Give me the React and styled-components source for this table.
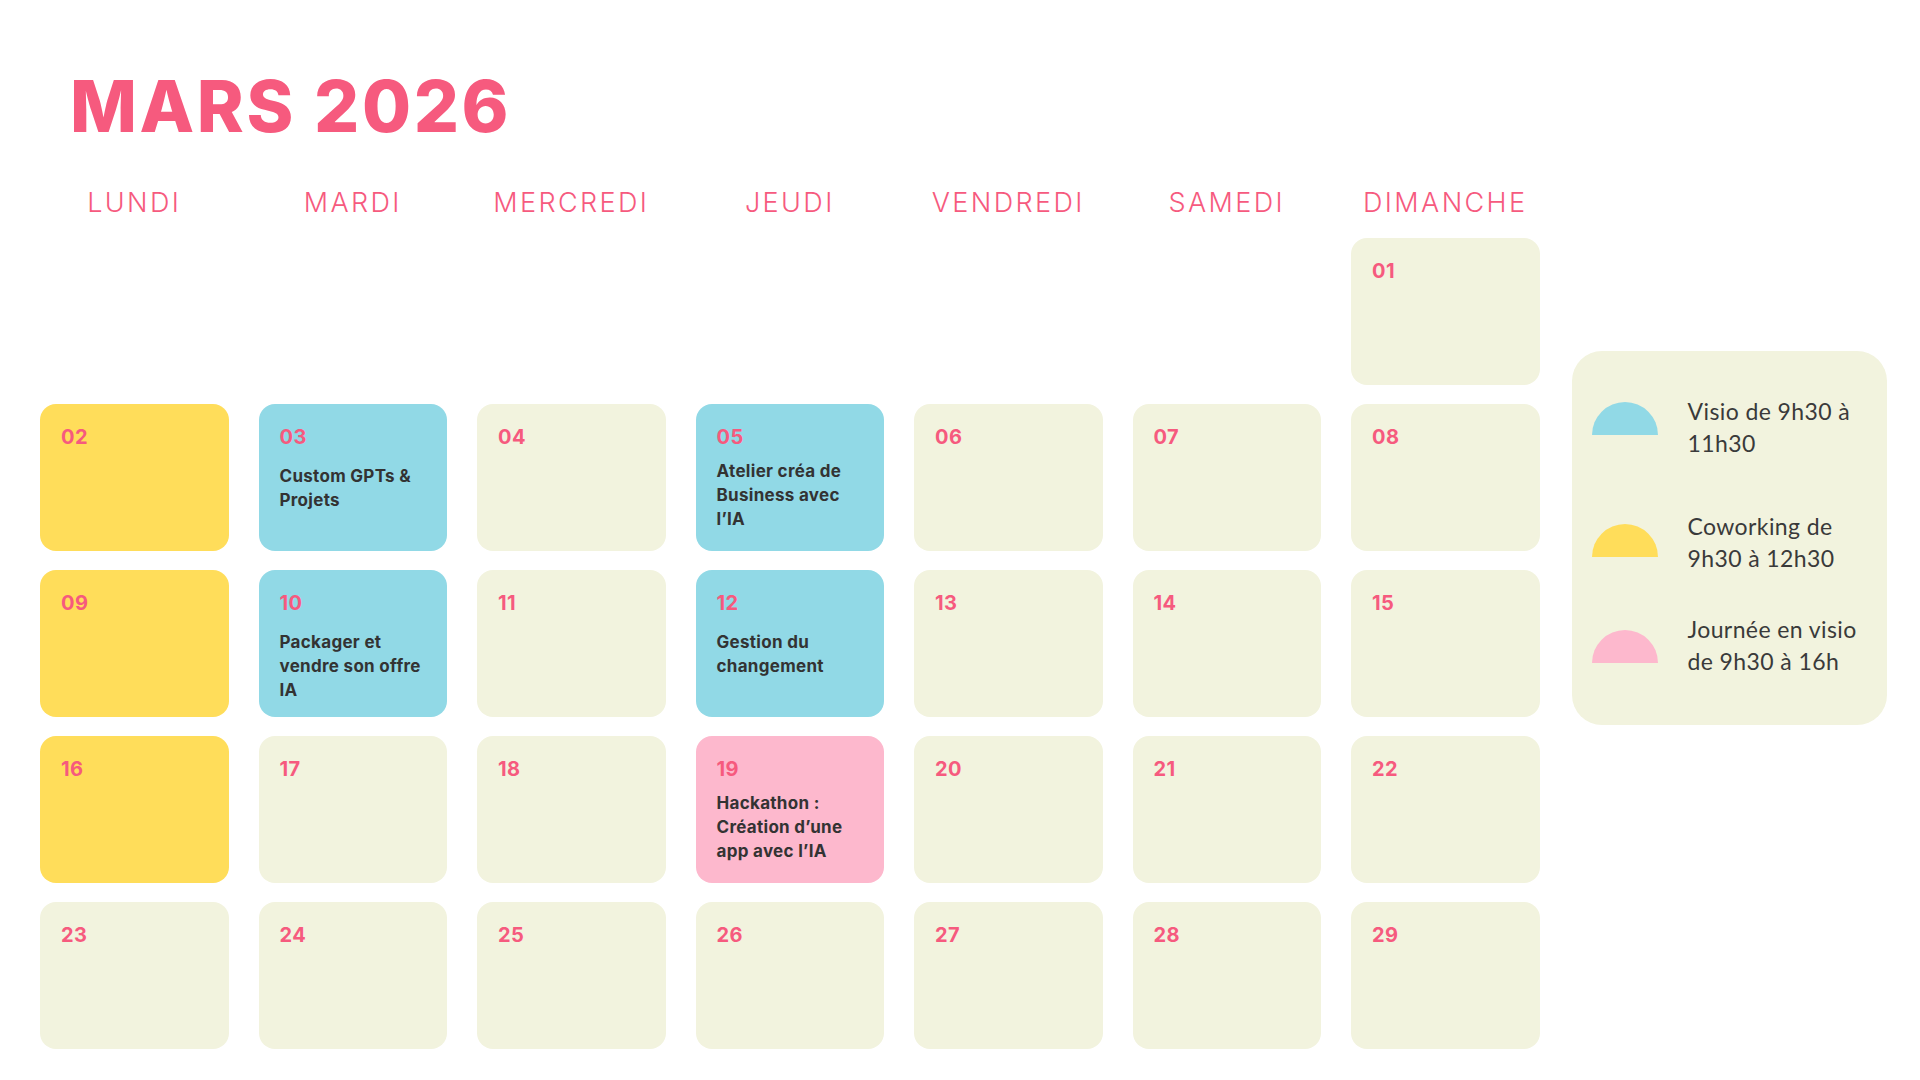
import React from "react";
import styled, { createGlobalStyle } from "styled-components";

const Global = createGlobalStyle`
  html, body { margin: 0; padding: 0; background: #ffffff; }
  body { font-family: "Inter", "Liberation Sans", sans-serif; }
`;

const PINK_TEXT = "#F65A7E";
const COLORS = {
  none: "#F2F3DE",
  yellow: "#FFDD5A",
  blue: "#91D9E6",
  pink: "#FDB8CD",
};

const Page = styled.div`
  width: 1920px;
  height: 1080px;
  box-sizing: border-box;
  padding: 71px 0 0 40px;
  background: #fff;
  overflow: hidden;
`;

const Title = styled.h1`
  margin: 0 0 42px 30px;
  font-family: "Inter", sans-serif;
  font-weight: 800;
  font-size: 71px;
  line-height: 1;
  color: ${PINK_TEXT};
  letter-spacing: 2.6px;
`;

const Main = styled.div`
  display: flex;
  align-items: flex-start;
  gap: 32px;
`;

const Calendar = styled.div`
  display: grid;
  grid-template-columns: repeat(7, 188.5px);
  grid-template-rows: 35px repeat(5, 147px);
  column-gap: 30px;
  row-gap: 19px;
`;

const DayName = styled.div`
  padding-top: 2px;
  text-align: center;
  font-family: "Inter", sans-serif;
  font-weight: 300;
  font-size: 27px;
  line-height: 34px;
  color: ${PINK_TEXT};
  letter-spacing: 2.4px;
`;

const Cell = styled.div`
  grid-column: ${(p) => p.$col};
  background: ${(p) => COLORS[p.$tone]};
  border-radius: 16px;
  box-sizing: border-box;
  padding: 21px 10px 0 21px;
  display: flex;
  flex-direction: column;
`;

const DateNum = styled.div`
  font-family: "Inter", sans-serif;
  font-weight: 700;
  font-size: 20px;
  line-height: 24px;
  color: ${PINK_TEXT};
  letter-spacing: 0.4px;
`;

const EventText = styled.div`
  margin-top: ${(p) => (p.$tight ? "10px" : "15px")};
  font-family: "Inter", sans-serif;
  font-weight: 700;
  font-size: 17px;
  line-height: 24px;
  color: #333333;
  letter-spacing: 0.3px;
  white-space: nowrap;
`;

const Legend = styled.aside`
  margin-top: 167px;
  width: 315px;
  height: 374px;
  box-sizing: border-box;
  padding: 44px 20px 0 20px;
  background: ${COLORS.none};
  border-radius: 30px;
  display: flex;
  flex-direction: column;
`;

const LegendItem = styled.div`
  display: flex;
  align-items: flex-start;
  gap: 30px;
  margin-top: ${(p) => p.$mt}px;
`;

const HalfDisc = styled.div`
  flex: none;
  width: 66px;
  height: 33px;
  margin-top: ${(p) => p.$offset}px;
  border-radius: 33px 33px 0 0;
  background: ${(p) => COLORS[p.$tone]};
`;

const LegendText = styled.div`
  font-family: "Lato", sans-serif;
  font-weight: 400;
  font-size: 23px;
  line-height: 32px;
  color: #3a3a3a;
  letter-spacing: 0.4px;
  white-space: nowrap;
`;

const days = ["LUNDI", "MARDI", "MERCREDI", "JEUDI", "VENDREDI", "SAMEDI", "DIMANCHE"];

const events = {
  2: { tone: "yellow" },
  3: { tone: "blue", text: ["Custom GPTs &", "Projets"] },
  5: { tone: "blue", text: ["Atelier créa de", "Business avec", "l’IA"], tight: true },
  9: { tone: "yellow" },
  10: { tone: "blue", text: ["Packager et", "vendre son offre", "IA"] },
  12: { tone: "blue", text: ["Gestion du", "changement"] },
  16: { tone: "yellow" },
  19: { tone: "pink", text: ["Hackathon :", "Création d’une", "app avec l’IA"], tight: true },
};

const legend = [
  { tone: "blue", lines: ["Visio de 9h30 à", "11h30"], mt: 0, offset: 7 },
  { tone: "yellow", lines: ["Coworking de", "9h30 à 12h30"], mt: 51, offset: 14 },
  { tone: "pink", lines: ["Journée en visio", "de 9h30 à 16h"], mt: 39, offset: 17 },
];

export default function App() {
  const cells = [];
  for (let d = 1; d <= 29; d++) {
    const col = ((d + 5) % 7) + 1; // March 1 2026 is a Sunday
    const ev = events[d] || { tone: "none" };
    cells.push(
      <Cell key={d} $col={col} $tone={ev.tone}>
        <DateNum>{String(d).padStart(2, "0")}</DateNum>
        {ev.text && (
          <EventText $tight={ev.tight}>
            {ev.text.map((l, i) => (
              <div key={i}>{l}</div>
            ))}
          </EventText>
        )}
      </Cell>
    );
  }

  return (
    <Page>
      <Global />
      <Title>MARS 2026</Title>
      <Main>
        <Calendar>
          {days.map((d) => (
            <DayName key={d}>{d}</DayName>
          ))}
          {cells}
        </Calendar>
        <Legend>
          {legend.map((l) => (
            <LegendItem key={l.tone} $mt={l.mt}>
              <HalfDisc $tone={l.tone} $offset={l.offset} />
              <LegendText>
                {l.lines.map((t, i) => (
                  <div key={i}>{t}</div>
                ))}
              </LegendText>
            </LegendItem>
          ))}
        </Legend>
      </Main>
    </Page>
  );
}
